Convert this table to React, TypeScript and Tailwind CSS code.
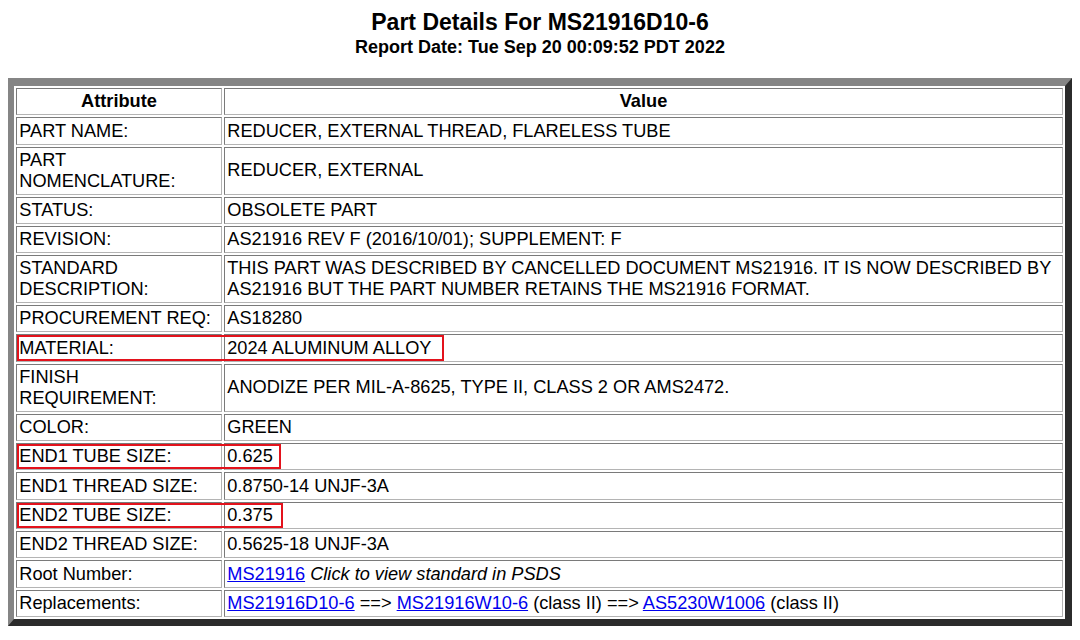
import React from "react";

const cell =
  "border border-solid border-t-[#7a7a7a] border-l-[#7a7a7a] border-r-[#b4b4b4] border-b-[#b4b4b4] px-[2.25px] py-[2.3px] align-middle text-left font-normal";

function Box({ w }: { w: number }) {
  return (
    <div
      className="absolute left-0 top-0 bottom-0 border-2 border-[#e3121c] pointer-events-none"
      style={{ width: w }}
    />
  );
}

type Row = { a: React.ReactNode; v: React.ReactNode; box?: number };

const A = ({ children }: { children: React.ReactNode }) => (
  <a href="#" className="text-[#0000ee] underline">
    {children}
  </a>
);

const rows: Row[] = [
  { a: "PART NAME:", v: "REDUCER, EXTERNAL THREAD, FLARELESS TUBE" },
  { a: "PART NOMENCLATURE:", v: "REDUCER, EXTERNAL" },
  { a: "STATUS:", v: "OBSOLETE PART" },
  { a: "REVISION:", v: "AS21916 REV F (2016/10/01); SUPPLEMENT: F" },
  {
    a: "STANDARD DESCRIPTION:",
    v: "THIS PART WAS DESCRIBED BY CANCELLED DOCUMENT MS21916. IT IS NOW DESCRIBED BY AS21916 BUT THE PART NUMBER RETAINS THE MS21916 FORMAT.",
  },
  { a: "PROCUREMENT REQ:", v: "AS18280" },
  { a: "MATERIAL:", v: "2024 ALUMINUM ALLOY", box: 427 },
  { a: "FINISH REQUIREMENT:", v: "ANODIZE PER MIL-A-8625, TYPE II, CLASS 2 OR AMS2472." },
  { a: "COLOR:", v: "GREEN" },
  { a: "END1 TUBE SIZE:", v: "0.625", box: 264 },
  { a: "END1 THREAD SIZE:", v: "0.8750-14 UNJF-3A" },
  { a: "END2 TUBE SIZE:", v: "0.375", box: 266 },
  { a: "END2 THREAD SIZE:", v: "0.5625-18 UNJF-3A" },
  {
    a: "Root Number:",
    v: (
      <>
        <A>MS21916</A> <i>Click to view standard in PSDS</i>
      </>
    ),
  },
  {
    a: "Replacements:",
    v: (
      <>
        <A>MS21916D10-6</A> ==&gt; <A>MS21916W10-6</A> (class II) ==&gt;{" "}
        <A>AS5230W1006</A> (class II)
      </>
    ),
  },
];

export default function App() {
  return (
    <div className="min-h-[640px] bg-white px-[8px] pt-[9px] text-black font-['Liberation_Sans',Arial,sans-serif] text-[18.2px]">
      <div className="text-center font-bold">
        <div className="text-[23px] leading-[26px]">Part Details For MS21916D10-6</div>
        <div className="mt-[2px] text-[18px] leading-[21px]">
          Report Date: Tue Sep 20 00:09:52 PDT 2022
        </div>
      </div>
      <table className="mt-[20px] w-full border-separate border-spacing-[2.25px] border-solid border-t-[8px] border-l-[6px] border-r-[7px] border-b-[7px] border-t-[#858585] border-l-[#858585] border-r-[#2b2b2b] border-b-[#2b2b2b] leading-[20.7px]">
        <thead>
          <tr>
            <th className={`${cell} w-[206px] !text-center !font-bold`}>Attribute</th>
            <th className={`${cell} !text-center !font-bold`}>Value</th>
          </tr>
        </thead>
        <tbody>
          {rows.map((r, i) => (
            <tr key={i}>
              <td className={`${cell} relative`}>
                {r.a}
                {r.box ? <Box w={r.box} /> : null}
              </td>
              <td className={cell}>{r.v}</td>
            </tr>
          ))}
        </tbody>
      </table>
    </div>
  );
}
